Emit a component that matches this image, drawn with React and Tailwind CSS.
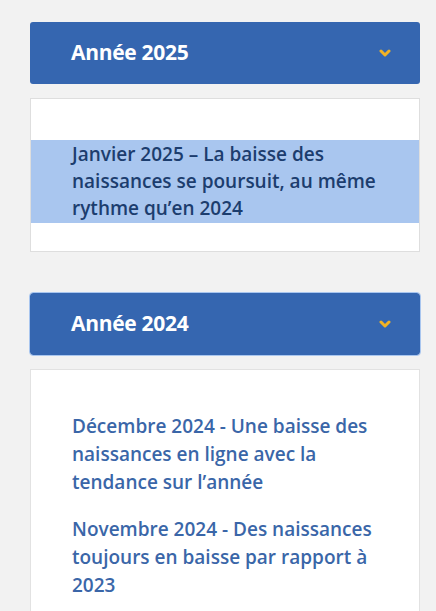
import React from "react";

const Chevron = () => (
  <svg width="12" height="9" viewBox="0 0 12 9" className="shrink-0">
    <path d="M2 2 L6 6 L10 2" fill="none" stroke="#f2b324" strokeWidth="3" strokeLinecap="round" strokeLinejoin="round" />
  </svg>
);

const YearHeader = ({ year, focused }) => (
  <div
    className={
      "h-[62px] flex items-center justify-between pl-[41px] pr-[29px] rounded-[3px] bg-[#3566b0] " +
      (focused ? "outline outline-1 outline-[#a9c6ef]" : "")
    }
  >
    <span className="text-white font-bold text-[21px] tracking-[-0.3px]">Année {year}</span>
    <Chevron />
  </div>
);

export default function App() {
  return (
    <div
      className="min-h-screen bg-[#f2f2f2] pt-[22px] pl-[30px] pr-[16px]"
      style={{ fontFamily: '"Open Sans", "Noto Sans", sans-serif' }}
    >
      <YearHeader year="2025" />
      <div className="mt-[14px] bg-white border border-[#dedede] pt-[41px] pb-[28px]">
        <div className="bg-[#a9c6ef] pl-[41px] pr-[20px] py-[1px]">
          <p className="text-[#1c3d6e] font-semibold text-[19px] leading-[27px]">
            Janvier 2025 – La baisse des naissances se poursuit, au même rythme qu’en 2024
          </p>
        </div>
      </div>

      <div className="mt-[41px]">
        <YearHeader year="2024" focused />
      </div>
      <div className="mt-[14px] bg-white border border-[#e2e2e2] pt-[42px] pb-[20px] pl-[41px] pr-[20px] flex flex-col gap-[19px]">
        <p className="text-[#3a66a8] font-semibold text-[19px] leading-[28px]">
          Décembre 2024 - Une baisse des naissances en ligne avec la tendance sur l’année
        </p>
        <p className="text-[#3a66a8] font-semibold text-[19px] leading-[28px]">
          Novembre 2024 - Des naissances toujours en baisse par rapport à 2023
        </p>
      </div>
    </div>
  );
}
